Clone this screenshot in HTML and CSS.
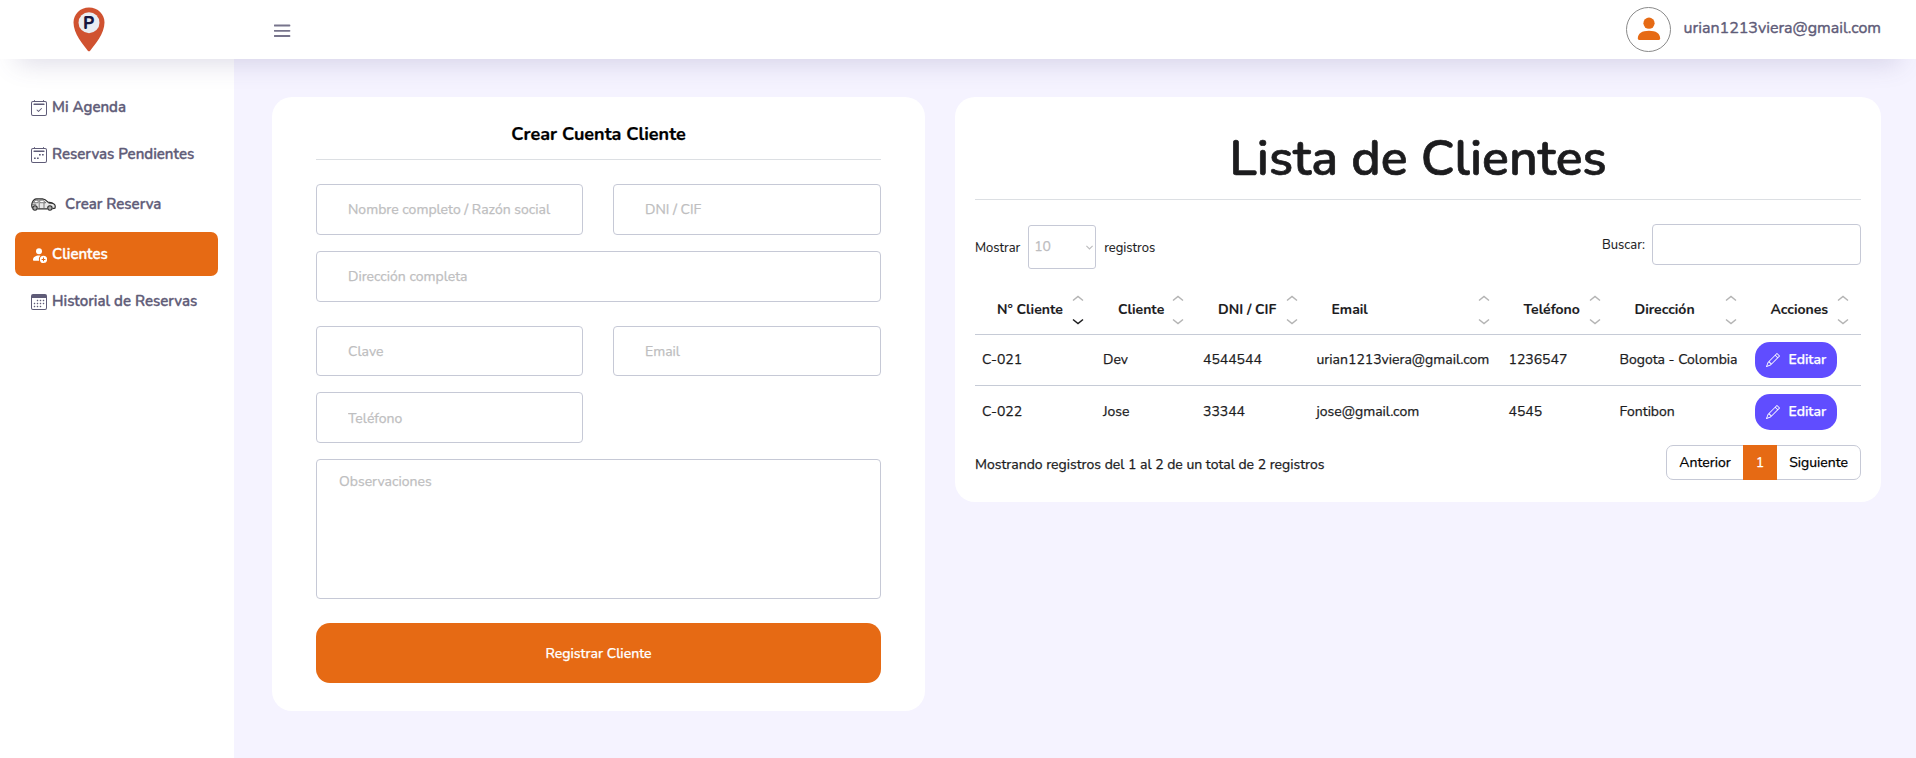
FILE: index.html
```html
<!DOCTYPE html>
<html lang="es">
<head>
<meta charset="utf-8">
<title>Clientes</title>
<link rel="stylesheet" href="styles.css">
</head>
<body>
<svg class="sprite" aria-hidden="true">
  <symbol id="cal" viewBox="0 0 16 16">
    <path d="M3.500 0a.5.5 0 0 1 .5.5V1h8V.5a.5.5 0 0 1 1 0V1h1a2 2 0 0 1 2 2v11a2 2 0 0 1-2 2H2a2 2 0 0 1-2-2V3a2 2 0 0 1 2-2h1V.5a.5.5 0 0 1 .5-.5zM2 2a1 1 0 0 0-1 1v11a1 1 0 0 0 1 1h12a1 1 0 0 0 1-1V3a1 1 0 0 0-1-1H2z"/>
    <path d="M2.500 4a.5.5 0 0 1 .5-.5h10a.5.5 0 0 1 .5.5v.5a.5.5 0 0 1-.5.5H3a.5.5 0 0 1-.5-.5V4z"/>
  </symbol>
  <symbol id="chev-down" viewBox="0 0 16 16"><path d="M2.500 5.200 8 10.700l5.500-5.500" fill="none" stroke="currentColor" stroke-width="2"/></symbol>
  <symbol id="sort" viewBox="0 0 12 30">
    <path d="M1 5.500 6 1.500l5 4" fill="none" stroke="var(--up)" stroke-width="1.500"/>
    <path d="M1 24.500l5 4 5-4" fill="none" stroke="var(--down)" stroke-width="1.500"/>
  </symbol>
  <symbol id="pencil" viewBox="0 0 16 16"><path d="M12.146.146a.5.5 0 0 1 .708 0l3 3a.5.5 0 0 1 0 .708l-10 10a.5.5 0 0 1-.168.110l-5 2a.5.5 0 0 1-.650-.650l2-5a.5.5 0 0 1 .110-.168l10-10zM11.207 2.500 13.500 4.793 14.793 3.500 12.500 1.207 11.207 2.500zm1.586 3L10.500 3.207 4 9.707V10h.5a.5.5 0 0 1 .5.5v.5h.5a.5.5 0 0 1 .5.5v.5h.293l6.500-6.500zm-9.761 5.175-.106.106-1.528 3.821 3.821-1.528.106-.106A.5.5 0 0 1 5 12.500V12h-.5a.5.5 0 0 1-.5-.5V11h-.5a.5.5 0 0 1-.468-.325z"/></symbol>
</svg>

<header class="topbar">
  <a class="logo">
    <svg width="32" height="45" viewBox="0 0 32 45">
      <path d="M16 0.500C7 .5.500 7.300.500 15.600.500 26.500 10 37.800 15 43.900q1 .9 2 0C22 37.800 31.500 26.500 31.500 15.600 31.500 7.300 25 .5 16 .5z" fill="#d05230"/>
      <circle cx="16" cy="15.700" r="10.500" fill="#e9edf2"/>
      <text class="logo-letter" x="15.700" y="21.700">P</text>
    </svg>
  </a>
  <svg class="burger" width="17" height="13" viewBox="0 0 17 13"><path d="M.5 1.500h15M.5 6.800h15M.5 12h15" stroke="#77748c" stroke-width="1.800" stroke-linecap="round"/></svg>
  <div class="user">
    <span class="avatar"><svg width="24" height="24" viewBox="0 0 24 24" fill="#e66a14"><circle cx="12" cy="6.200" r="5.600"/><path d="M.8 21.500C.8 16.500 5 13.800 12 13.800s11.200 2.700 11.200 7.700c0 .9-.6 1.400-1.400 1.400H2.200c-.8 0-1.400-.5-1.400-1.400z"/></svg></span>
    <span class="user-mail">urian1213viera@gmail.com</span>
  </div>
</header>

<div class="shell">
  <nav class="sidebar">
    <a class="nav-item"><svg class="ico" viewBox="0 0 16 16"><use href="#cal"/><path d="M10.854 8.146a.5.5 0 0 1 0 .708l-3 3a.5.5 0 0 1-.708 0l-1.500-1.500a.5.5 0 0 1 .708-.708L7.500 10.793l2.646-2.647a.5.5 0 0 1 .708 0z"/></svg><span>Mi Agenda</span></a>
    <a class="nav-item"><svg class="ico" viewBox="0 0 16 16"><use href="#cal"/><path d="M11 7h1.700v1.500H11zM8 7h1.700v1.500H8zM3 10.500h1.700V12H3zM6 10.500h1.700V12H6z"/></svg><span>Reservas Pendientes</span></a>
    <a class="nav-item nav-item--car">
      <svg class="car" width="25" height="13" viewBox="0 0 25 13" fill="none" stroke="#2e2e2e">
        <path d="M1.500 10.300C.6 8.500.5 6.500 1.200 4.600 2 2.400 3.400.9 5.500.8h6c2.200.1 3.900 1.600 5.500 3.400 3 .3 5.300 1.100 6.500 2.200.8 1 .9 2.400.4 3.800l-2.400.4M6.500 10.800h9.700" fill="#e8e8e8" stroke-width="1.200"/>
        <path d="M2.600 4.700 4.200 2.200h3v2.500zM8.700 2.200h3l3 2.500h-6z" fill="#fff" stroke-width=".6"/>
        <path d="M1.200 6.300h4M8.200 5v5.500M13 5v5M17.500 5.500h4.500" stroke-width=".6"/>
        <circle cx="4" cy="10" r="2.200" fill="#aaa" stroke-width="1.100"/><circle cx="18.900" cy="10" r="2.200" fill="#aaa" stroke-width="1.100"/>
      </svg><span>Crear Reserva</span></a>
    <a class="nav-item nav-item--active"><svg class="ico" viewBox="0 0 16 16"><circle cx="8" cy="4.300" r="3"/><path d="M2 13C2 10 4.500 8.500 8 8.500c.6 0 1.100 0 1.500.2-1 .8-1.600 1.900-1.600 3.200 0 .7.1 1.200.3 1.800H2.800c-.6 0-.8-.3-.8-.7z"/><path fill-rule="evenodd" d="M12.500 8.800a3.600 3.600 0 1 0 0 7.200 3.600 3.600 0 0 0 0-7.200zm.5 1.700v1.400h1.400v1H13v1.400h-1v-1.400h-1.400v-1H12v-1.400z"/></svg><span>Clientes</span></a>
    <a class="nav-item"><svg class="ico" viewBox="0 0 16 16"><path fill-rule="evenodd" d="M2 0h12a2 2 0 0 1 2 2v12a2 2 0 0 1-2 2H2a2 2 0 0 1-2-2V2a2 2 0 0 1 2-2zM1 4v10a1 1 0 0 0 1 1h12a1 1 0 0 0 1-1V4z"/><path d="M6 6h1v1H6zM9 6h1v1H9zM12 6h1v1h-1zM3 9h1v1H3zM6 9h1v1H6zM9 9h1v1H9zM12 9h1v1h-1zM3 12h1v1H3zM6 12h1v1H6zM9 12h1v1H9z" stroke="currentColor" stroke-width=".4"/></svg><span>Historial de Reservas</span></a>
  </nav>

  <main class="content">
    <section class="card card--form">
      <h3 class="form-title">Crear Cuenta Cliente</h3>
      <form class="form-grid">
        <input class="field" placeholder="Nombre completo / Razón social">
        <input class="field" placeholder="DNI / CIF">
        <input class="field field--wide" placeholder="Dirección completa">
        <input class="field" placeholder="Clave">
        <input class="field" placeholder="Email">
        <input class="field field--solo" placeholder="Teléfono">
        <textarea class="field field--area" placeholder="Observaciones"></textarea>
        <button class="submit" type="button">Registrar Cliente</button>
      </form>
    </section>

    <section class="card card--list">
      <h1 class="list-title">Lista de Clientes</h1>
      <div class="list-tools">
        <div class="length">Mostrar <span class="length-select">10<svg width="9" height="9"><use href="#chev-down"/></svg></span> registros</div>
        <label class="search">Buscar: <input class="search-input"></label>
      </div>
      <table class="clients">
        <colgroup><col class="c1"><col class="c2"><col class="c3"><col class="c4"><col class="c5"><col class="c6"><col class="c7"></colgroup>
        <thead><tr>
          <th><div class="th th--sorted">N° Cliente<svg class="sort"><use href="#sort"/></svg></div></th>
          <th><div class="th">Cliente<svg class="sort"><use href="#sort"/></svg></div></th>
          <th><div class="th">DNI / CIF<svg class="sort"><use href="#sort"/></svg></div></th>
          <th><div class="th">Email<svg class="sort"><use href="#sort"/></svg></div></th>
          <th><div class="th">Teléfono<svg class="sort"><use href="#sort"/></svg></div></th>
          <th><div class="th">Dirección<svg class="sort"><use href="#sort"/></svg></div></th>
          <th><div class="th">Acciones<svg class="sort"><use href="#sort"/></svg></div></th>
        </tr></thead>
        <tbody>
          <tr><td>C-021</td><td>Dev</td><td>4544544</td><td>urian1213viera@gmail.com</td><td>1236547</td><td>Bogota - Colombia</td><td class="actions"><button class="edit" type="button"><svg width="14" height="14"><use href="#pencil"/></svg>Editar</button></td></tr>
          <tr><td>C-022</td><td>Jose</td><td>33344</td><td>jose@gmail.com</td><td>4545</td><td>Fontibon</td><td class="actions"><button class="edit" type="button"><svg width="14" height="14"><use href="#pencil"/></svg>Editar</button></td></tr>
        </tbody>
      </table>
      <div class="list-foot">
        <span class="info">Mostrando registros del 1 al 2 de un total de 2 registros</span>
        <div class="pager"><a class="page">Anterior</a><a class="page page--on">1</a><a class="page">Siguiente</a></div>
      </div>
    </section>
  </main>
</div>
</body>
</html>
```
FILE: styles.css
```css
* { box-sizing: border-box; }
body {
  margin: 0;
  height: 758px;
  overflow: hidden;
  background: #f5f3ff;
  font: 400 14px/20px "Nunito", "Lato", sans-serif;
  color: #1c1c1e;
  -webkit-text-stroke-width: .25px;
}
input, textarea, button { font: inherit; -webkit-text-stroke-width: .25px; }
.sprite { position: absolute; width: 0; height: 0; }

.topbar {
  position: relative;
  z-index: 2;
  display: flex;
  align-items: flex-start;
  height: 59px;
  background: #fff;
  box-shadow: 0 20px 27px -17px rgba(80, 75, 130, .22);
}
.logo { width: 273px; padding: 6.500px 0 0 73px; }
.logo svg { display: block; }
.logo-letter { font: 800 17px "Nunito", sans-serif; fill: #16163f; text-anchor: middle; }
.burger { margin: 24px 0 0 .5px; }
.user { display: flex; margin: 7px 35px 0 auto; }
.avatar {
  display: flex;
  align-items: center;
  justify-content: center;
  width: 45px;
  height: 45px;
  margin-right: 13px;
  padding: 0 0 1px 1px;
  border: 1px solid #8a8a8a;
  border-radius: 50%;
}
.user-mail { padding-top: 11px; font-size: 16px; color: #5f5c78; -webkit-text-stroke-width: .4px; }

.shell { display: flex; height: 699px; }
.sidebar {
  display: flex;
  flex-direction: column;
  gap: 3px;
  width: 234px;
  padding: 26px 16px 0 15px;
  background: #fff;
}
.nav-item {
  display: flex;
  align-items: center;
  gap: 5px;
  height: 44px;
  padding: 0 0 0 16px;
  border-radius: 7px;
  font-size: 15px;
  font-weight: 600;
  color: #5f5c78;
  -webkit-text-stroke-width: .35px;
}
.nav-item .ico { width: 16px; height: 16px; margin-top: 2px; fill: currentColor; }
.nav-item--car { height: 50px; gap: 9px; }
.nav-item--active { background: #e66a14; color: #fff; }

.content {
  display: flex;
  align-items: flex-start;
  flex: 1;
  gap: 30px;
  padding: 38px 35px 0 38px;
}
.card { background: #fff; border-radius: 20px; }
.card--form { width: 653px; height: 614px; padding: 24px 44px 0; }
.form-title {
  margin: 0 0 24px;
  height: 39px;
  border-bottom: 1px solid #dcdfe3;
  font-size: 18px;
  font-weight: 700;
  line-height: 26px;
  text-align: center;
  color: #000;
}
.form-grid {
  display: grid;
  grid-template-columns: 267px 268px;
  grid-template-rows: 51px 51px 50px 51px 140px 60px;
  gap: 16px 30px;
}
.field {
  width: 100%;
  padding: 0 31px;
  border: 1px solid #c6c9d6;
  border-radius: 4px;
  background: #fff;
  outline: 0;
}
.field::placeholder { color: #bebec0; opacity: 1; }
.field--wide, .field--area, .submit { grid-column: 1 / -1; }
.field--wide ~ .field { margin-top: 8px; height: 100%; }
.field--solo { grid-column: 1; padding-top: 1px; }
.field--area { display: block; padding: 12px 22px; resize: none; }
.submit {
  height: 100%;
  margin-top: 16px;
  padding-top: 3px;
  border: 0;
  border-radius: 14px;
  background: #e66a14;
  color: #fff;
  font-weight: 500;
}

.card--list { width: 926px; height: 405px; padding: 20px 20px 0; }
.list-title {
  margin: 0 0 24px;
  height: 83px;
  border-bottom: 1px solid #dcdfe3;
  font-size: 50px;
  font-weight: 600;
  line-height: 83px;
  text-align: center;
  -webkit-text-stroke-width: .7px;
}
.list-tools { display: flex; justify-content: space-between; height: 60px; font-size: 13px; -webkit-text-stroke-width: .1px; }
.length { display: flex; align-items: center; gap: 8px; height: 46px; padding-top: 1px; }
.length-select {
  display: flex;
  align-items: center;
  justify-content: space-between;
  width: 68px;
  height: 44px;
  margin-top: -2px;
  padding: 1px 1px 0 5px;
  border: 1px solid #c6c9d6;
  border-radius: 3px;
  font-size: 14px;
  color: #bdbdbf;
  -webkit-text-stroke-width: .25px;
}
.search { display: flex; align-items: center; gap: 7px; height: 41px; }
.search-input { width: 209px; height: 41px; border: 1px solid #c6c9d6; border-radius: 4px; }

.clients { width: 886px; table-layout: fixed; border-collapse: separate; border-spacing: 0; }
.c1 { width: 121px; } .c2 { width: 100px; } .c3 { width: 113.500px; } .c4 { width: 192px; }
.c5 { width: 111px; } .c6 { width: 136px; } .c7 { width: 112.500px; }
.clients th { height: 51px; padding: 1px 0 0; border-bottom: 1px solid #c6cbd6; font-weight: 700; text-align: left; }
.clients td { height: 51px; padding: 0 0 0 7px; white-space: nowrap; }
.clients .actions { padding-left: 6px; }
.clients tbody tr:first-child td { border-bottom: 1px solid #c6cbd6; }
.th { --up: #b4b4b4; --down: #b4b4b4; display: flex; align-items: center; justify-content: space-between; padding: 0 12px 0 22px; -webkit-text-stroke-width: .1px; }
.th--sorted { --down: #1c1c1e; }
.sort { width: 12px; height: 30px; }
.edit {
  display: flex;
  align-items: center;
  gap: 9px;
  width: 82px;
  height: 36px;
  padding: 0 0 0 11px;
  border: 0;
  border-radius: 15px;
  background: #604dff;
  color: #fff;
  font-weight: 600;
}
.edit svg { fill: #fff; }

.list-foot { display: flex; justify-content: space-between; padding-top: 8px; }
.info { padding-top: 10px; }
.pager { display: flex; height: 35px; border: 1px solid #c6c9d6; border-radius: 7px; }
.page { padding: 0 12px; line-height: 33px; color: #000; }
.page--on { margin: -1px 0; padding: 0 13px; line-height: 35px; background: #e66a14; color: #fff; }
```
